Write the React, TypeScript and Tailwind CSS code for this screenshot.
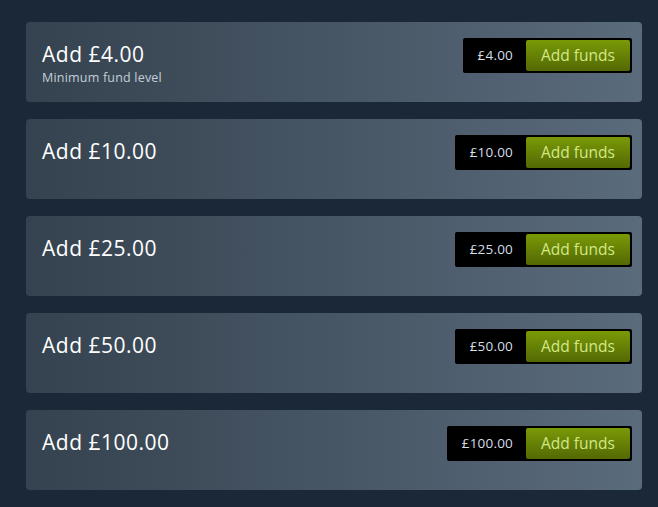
import React from 'react';

const AMOUNTS = [
  { value: '£4.00', note: 'Minimum fund level' },
  { value: '£10.00' },
  { value: '£25.00' },
  { value: '£50.00' },
  { value: '£100.00' },
];

const App: React.FC = () => {
  return (
    <div className="w-[658px] h-[507px] bg-[#1b2838] pt-[22px] pl-[26px] overflow-hidden" style={{ fontFamily: '"Open Sans", Arial, sans-serif' }}>
      <div className="w-[616px] flex flex-col gap-[17px]">
        {AMOUNTS.map((a) => (
          <div
            key={a.value}
            className="h-[80px] rounded-[4px] bg-gradient-to-r from-[#35424f] to-[#5a6b7c] flex justify-between items-start pl-4 pr-[10px] pt-4"
          >
            <div className="flex flex-col mt-[2px]">
              <h2 className="text-[21px] leading-[28px] tracking-[0.5px] text-white font-medium">Add {a.value}</h2>
              {a.note && <p className="text-[12.5px] leading-[16px] tracking-[0.2px] text-[#c3ced8] mt-[2px]">{a.note}</p>}
            </div>
            <div className="flex items-center bg-black rounded-[2px] p-[2px] h-[35px]">
              <span className="px-[13px] text-[13.5px] tracking-[0.2px] text-[#d6dee6]">{a.value}</span>
              <button className="h-[31px] w-[104px] rounded-[2px] bg-gradient-to-b from-[#7a9a07] to-[#536904] text-[#d2e885] text-[15.5px]">
                Add funds
              </button>
            </div>
          </div>
        ))}
      </div>
    </div>
  );
};

export default App;
